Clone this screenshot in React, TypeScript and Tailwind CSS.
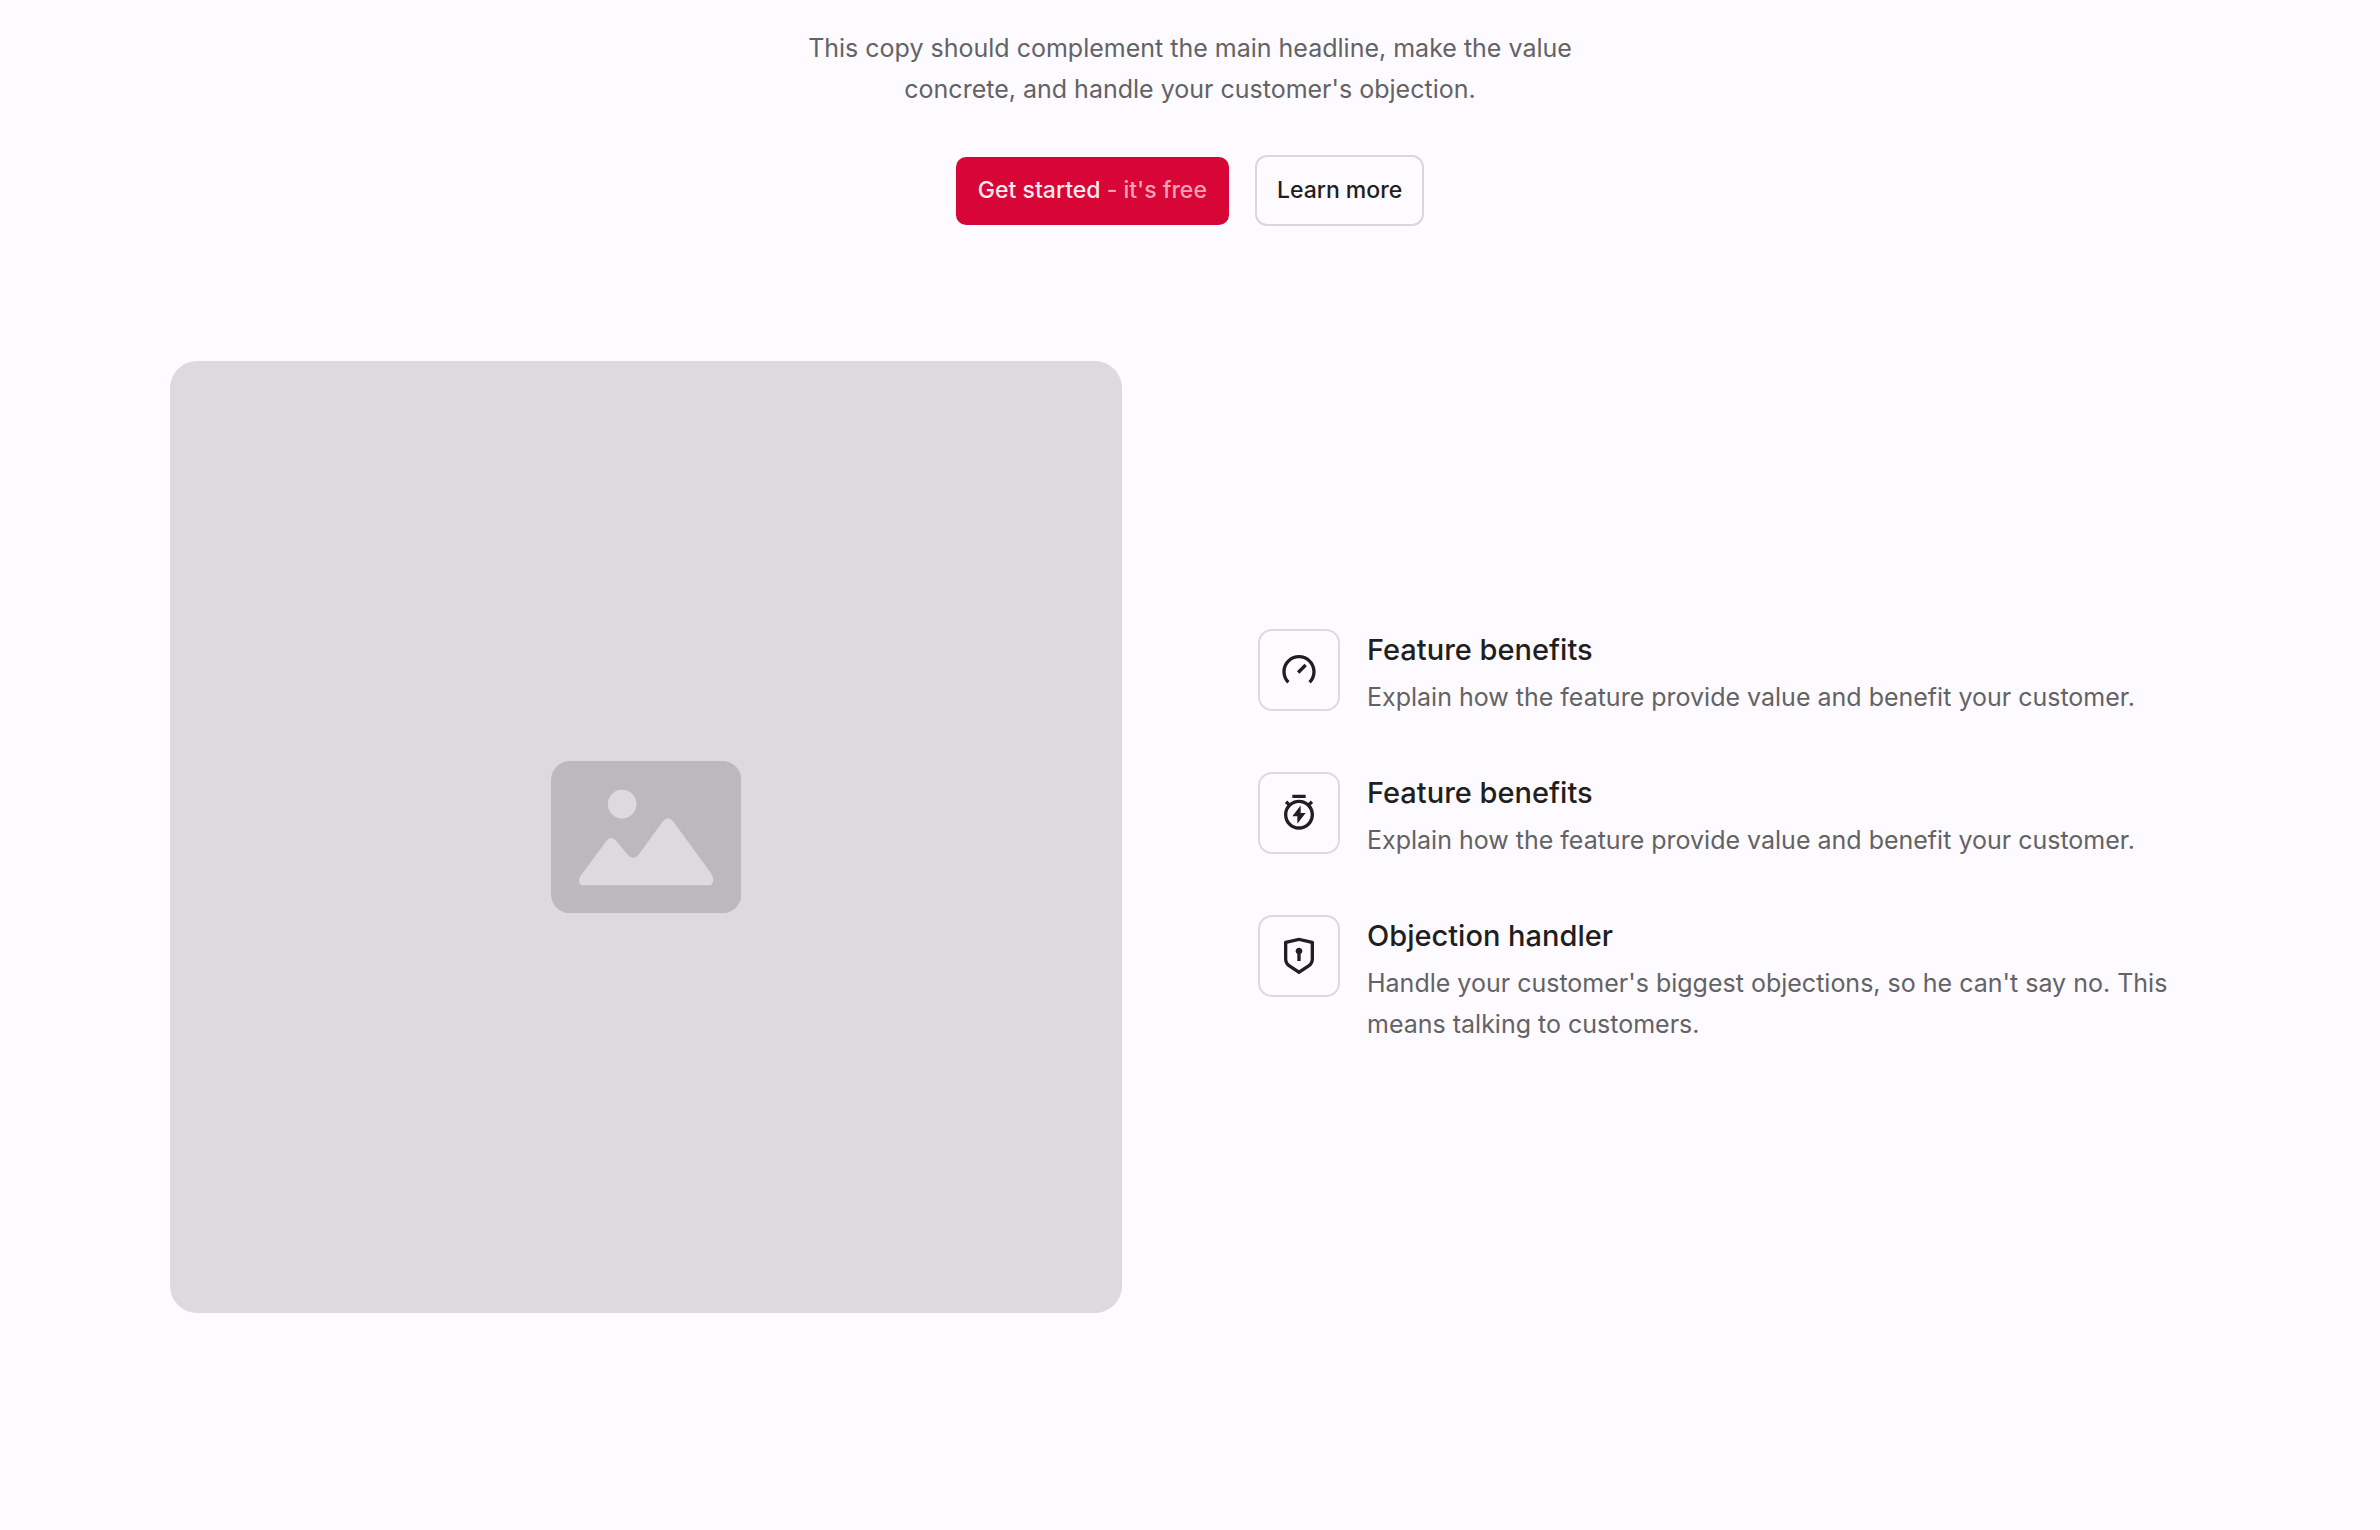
import React from "react";
import { RiShieldKeyholeLine, RiSpeedUpLine, RiTimerFlashLine } from "react-icons/ri";

// Feature list data
const features = [
  {
    icon: RiSpeedUpLine,
    title: "Feature benefits",
    text: "Explain how the feature provide value and benefit your customer.",
  },
  {
    icon: RiTimerFlashLine,
    title: "Feature benefits",
    text: "Explain how the feature provide value and benefit your customer.",
  },
  {
    icon: RiShieldKeyholeLine,
    title: "Objection handler",
    text: "Handle your customer's biggest objections, so he can't say no. This means talking to customers.",
  },
];

const Intro = (): React.ReactElement => {
  return (
    <header className="flex flex-col items-center gap-[45px]">
      <p className="max-w-[800px] text-center text-[25px] leading-[41px] text-[#636265]">
        This copy should complement the main headline, make the value concrete, and handle your
        customer's objection.
      </p>
      <div className="flex items-center gap-[26px]">
        <button
          type="button"
          className="h-[68px] rounded-[10px] bg-[#d70637] px-[22px] text-[23px] font-medium text-[#fdeaee]"
        >
          Get started <span className="text-[#f5a3b3]">- it's free</span>
        </button>
        <button
          type="button"
          className="h-[71px] rounded-[12px] border-2 border-[#d9d7da] px-[20px] text-[23px] font-medium text-[#1f1e21]"
        >
          Learn more
        </button>
      </div>
    </header>
  );
};

const Placeholder = (): React.ReactElement => {
  return (
    <div className="flex aspect-square items-center justify-center rounded-[27px] bg-[#dcdadd]">
      <svg className="w-1/5" viewBox="0 0 190 152" role="img" aria-label="Image placeholder">
        <rect width="190" height="152" rx="19" fill="#bbb9bc" />
        <circle cx="71" cy="43" r="14.3" fill="#dcdadd" />
        <path
          d="M30 124Q27.500 121.500 28 118.500Q28.500 115.500 31 112.500L55.500 79.500Q60 74 65 79.500L77 94Q82 99 87 94L111.500 60.500Q116.500 54 122 60.500L159 111Q161.500 114.500 162 118.500Q162 122 159.500 124Z"
          fill="#dcdadd"
        />
      </svg>
    </div>
  );
};

const FeatureList = (): React.ReactElement => {
  return (
    <ul className="flex flex-col gap-[54px]">
      {features.map((feature, index) => {
        const Icon = feature.icon;
        return (
          <li key={index} className="flex items-start gap-[27px]">
            <div className="flex size-[82px] shrink-0 items-center justify-center rounded-[14px] border-2 border-[#dcdadd] text-[#1f1e21]">
              <Icon className="size-[40px]" />
            </div>
            <div className="flex flex-col gap-[7px]">
              <h3 className="text-[29px] font-medium leading-[41px] text-[#1f1e21]">
                {feature.title}
              </h3>
              <p className="text-[25px] leading-[41px] text-[#636265]">{feature.text}</p>
            </div>
          </li>
        );
      })}
    </ul>
  );
};

export default function App(): React.ReactElement {
  return (
    <main className="min-h-screen bg-[#fdfbff] px-[170px] pt-[28px] pb-[170px] [font-family:Inter,'Liberation_Sans',sans-serif]">
      <Intro />
      <section className="mt-[135px] grid grid-cols-2 items-center gap-[136px]">
        <Placeholder />
        <FeatureList />
      </section>
    </main>
  );
}
